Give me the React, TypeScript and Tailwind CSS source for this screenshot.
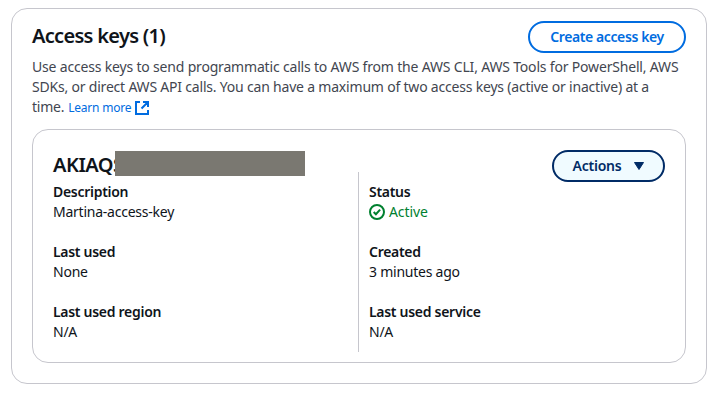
import React from "react";

type FieldProps = { label: string; children: React.ReactNode };

function Field({ label, children }: FieldProps) {
  return (
    <div className="h-[60px] text-[14px] leading-5 whitespace-nowrap">
      <div className="font-semibold tracking-[-0.29px]">{label}</div>
      <div className="tracking-[-0.24px]">{children}</div>
    </div>
  );
}

export default function App() {
  return (
    <div className="h-[404px] w-[713px] overflow-hidden bg-white pt-2 pl-[11px] font-['Noto_Sans','Open_Sans',sans-serif] text-[#0f141a]">
      <section className="h-[376px] w-[696px] rounded-2xl border border-[#c6c6cd] pt-3 pl-5">
        <header className="flex w-[654px] items-center justify-between">
          <h2 className="pb-0.5 text-[20px] leading-6 font-semibold tracking-[-0.7px]">Access keys (1)</h2>
          <button className="h-8 w-[158px] rounded-full border-2 border-[#006ce0] pb-0.5 text-[14px] font-semibold tracking-[-0.4px] text-[#006ce0]">Create access key</button>
        </header>
        <div className="mt-1 text-[14px] leading-5 whitespace-nowrap text-[#424650]">
          <p className="tracking-[-0.18px]">Use access keys to send programmatic calls to AWS from the AWS CLI, AWS Tools for PowerShell, AWS</p>
          <p className="tracking-[-0.2px]">SDKs, or direct AWS API calls. You can have a maximum of two access keys (active or inactive) at a</p>
          <p className="flex h-5 tracking-[-0.25px]">time. <a className="ml-1 flex items-center gap-[3px] pt-px text-[12px] tracking-[-0.2px] text-[#006ce0]">Learn more
            <svg className="size-4" viewBox="0 0 16 16" fill="none" stroke="currentColor" strokeWidth="2"><path d="M6 2H2v12h12v-4M9 2h5v5M14 2 7.5 8.5" /></svg></a></p>
        </div>
        <article className="mt-3 h-[234px] w-[654px] rounded-2xl border border-[#c6c6cd] pt-5 pl-5">
          <div className="flex w-[612px] justify-between">
            <div className="relative"><h3 className="text-[20px] leading-[30px] font-semibold tracking-[-0.5px]">AKIAQS</h3><div className="absolute top-px left-[62px] h-[25px] w-[190px] bg-[#7a7871]" /></div>
            <button className="flex h-8 w-[113px] items-center justify-center gap-3 rounded-full border-2 border-[#002b66] bg-[#f0fbff] pl-px text-[14px] font-semibold tracking-[-0.25px] text-[#002b66]"><span className="pb-px">Actions</span>
              <svg className="h-2 w-3" viewBox="0 0 12 8" fill="currentColor" stroke="currentColor" strokeLinejoin="round"><path d="M1.5.5h9L6 7.5Z" /></svg></button>
          </div>
          <div className="flex">
            <div className="w-[305px]"><Field label="Description">Martina-access-key</Field><Field label="Last used">None</Field><Field label="Last used region">N/A</Field></div>
            <div className="-mt-[10px] h-[180px] border-l border-[#c6c6cd] pt-[10px] pl-[10px]">
              <Field label="Status"><span className="flex items-center gap-1 tracking-[-0.1px] text-[#00802f]"><svg className="size-4" viewBox="0 0 16 16" fill="none" stroke="currentColor" strokeWidth="2"><circle cx="8" cy="8" r="7" /><path d="m4.7 8 2.2 2.2 4.2-4.6" /></svg>Active</span></Field>
              <Field label="Created">3 minutes ago</Field><Field label="Last used service">N/A</Field>
            </div>
          </div>
        </article>
      </section>
    </div>
  );
}
